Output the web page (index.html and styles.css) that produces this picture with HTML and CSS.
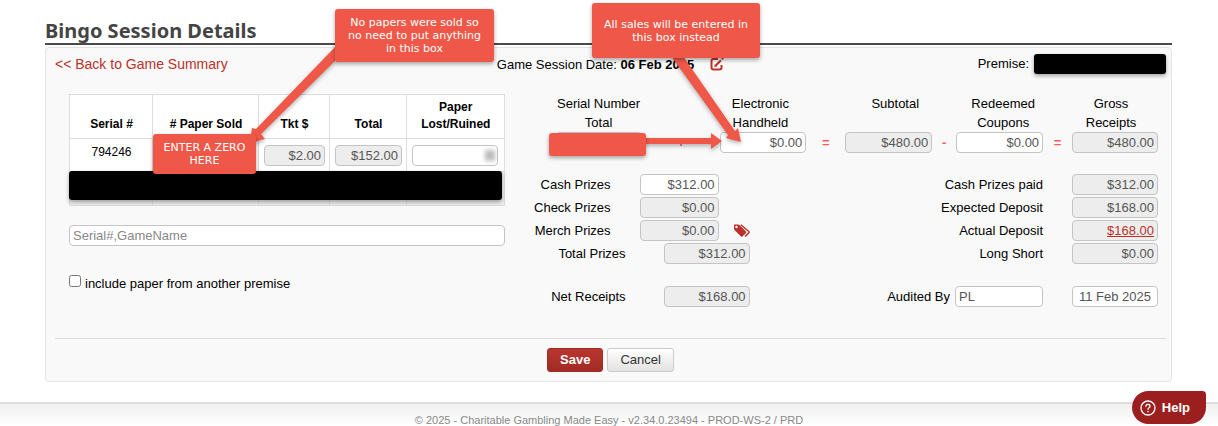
FILE: index.html
```html
<!DOCTYPE html>
<html lang="en">
<head>
    <meta charset="UTF-8">
    <meta name="viewport" content="width=device-width, initial-scale=1.0">
    <title>Bingo Session Details</title>
    <link rel="stylesheet" href="styles.css">
</head>
<body>

    <main class="page">
        <h1>Bingo Session Details</h1>

        <form class="panel">
            <div class="top-bar">
                <a href="#" class="back">&lt;&lt; Back to Game Summary</a>
                <div class="session-date">
                    <span>Game Session Date: <b>06 Feb 2025</b></span>
                    <a href="#" class="edit" aria-label="Edit date">
                        <svg width="14" height="14" viewBox="0 0 14 14" fill="none" stroke="#c0332b" stroke-width="2">
                            <path d="M8 2H3.500Q1.500 2 1.500 4V10.500Q1.500 12.500 3.500 12.500H9.500Q11.500 12.500 11.500 10.500V8"/>
                            <path d="M5.500 8.700L11 3.200" stroke-width="2.200"/>
                            <path d="M11.900 2.300L13.200 1" stroke-width="2.200"/>
                            <path d="M4.200 10L4.800 7.300L6.900 9.400Z" fill="#c0332b" stroke="none"/>
                        </svg>
                    </a>
                </div>
                <div class="premise">Premise: <span class="redacted"></span></div>
            </div>

            <div class="content">
                <!-- Paper list -->
                <section class="paper">
                    <div class="paper-list">
                        <table>
                            <colgroup>
                                <col class="col-serial"><col class="col-sold"><col class="col-tkt"><col class="col-total"><col class="col-lost">
                            </colgroup>
                            <thead>
                                <tr>
                                    <th>Serial #</th>
                                    <th># Paper Sold</th>
                                    <th>Tkt $</th>
                                    <th>Total</th>
                                    <th>Paper Lost/Ruined</th>
                                </tr>
                            </thead>
                            <tbody>
                                <tr>
                                    <td class="serial">794246</td>
                                    <td></td>
                                    <td><input type="text" value="$2.00" aria-label="Tkt $" readonly></td>
                                    <td><input type="text" value="$152.00" aria-label="Total" readonly></td>
                                    <td class="lost"><input type="text" aria-label="Paper Lost/Ruined"><span class="smudge"></span></td>
                                </tr>
                                <tr class="last"><td></td><td></td><td></td><td></td><td></td></tr>
                            </tbody>
                        </table>
                        <div class="redacted-row"></div>
                    </div>
                    <input type="text" class="search" placeholder="Serial#,GameName" aria-label="Serial#,GameName">
                    <div class="other-premise">
                        <input type="checkbox" id="otherPremise">
                        <label for="otherPremise">include paper from another premise</label>
                    </div>
                </section>

                <!-- Receipts and prizes -->
                <section class="totals">
                    <div class="equation-labels">
                        <label for="serialTotal">Serial Number Total</label>
                        <span></span>
                        <label for="handheld">Electronic Handheld</label>
                        <span></span>
                        <label for="subtotal">Subtotal</label>
                        <span></span>
                        <label for="coupons">Redeemed Coupons</label>
                        <span></span>
                        <label for="gross">Gross Receipts</label>
                    </div>
                    <div class="equation">
                        <input type="text" id="serialTotal" readonly>
                        <span class="op">+</span>
                        <input type="text" id="handheld" value="$0.00">
                        <span class="op">=</span>
                        <input type="text" id="subtotal" value="$480.00" readonly>
                        <span class="op">-</span>
                        <input type="text" id="coupons" value="$0.00">
                        <span class="op">=</span>
                        <input type="text" id="gross" value="$480.00" readonly>
                    </div>

                    <div class="summary">
                        <div class="prizes">
                            <div class="prize-row">
                                <label for="cash">Cash Prizes</label>
                                <input type="text" id="cash" value="$312.00">
                            </div>
                            <div class="prize-row">
                                <label for="check">Check Prizes</label>
                                <input type="text" id="check" value="$0.00" readonly>
                            </div>
                            <div class="prize-row">
                                <label for="merch">Merch Prizes</label>
                                <input type="text" id="merch" value="$0.00" readonly>
                                <a href="#" class="tags" aria-label="Merch prizes">
                                    <svg width="18" height="15" viewBox="0 0 18 15">
                                        <path fill="#b9322b" fill-rule="evenodd" d="M1 1.500L1 5.800Q1 6.500 1.500 7L8 13.500Q8.700 14.100 9.400 13.500L13 9.900Q13.600 9.200 13 8.500L6.500 2Q6 1.500 5.300 1.500ZM3.500 2.800A1.200 1.200 0 1 1 3.500 5.200A1.200 1.200 0 1 1 3.500 2.800Z"/>
                                        <path fill="none" stroke="#b9322b" stroke-width="1.500" d="M7.800 1.800L15.800 8.500Q16.500 9.200 15.800 9.900L12 13.500"/>
                                    </svg>
                                </a>
                            </div>
                            <div class="prize-row total">
                                <label for="totalPrizes">Total Prizes</label>
                                <input type="text" id="totalPrizes" value="$312.00" readonly>
                            </div>
                            <div class="prize-row total net">
                                <label for="net">Net Receipts</label>
                                <input type="text" id="net" value="$168.00" readonly>
                            </div>
                        </div>

                        <div class="deposits">
                            <div class="deposit-row">
                                <label for="cashPaid">Cash Prizes paid</label>
                                <input type="text" id="cashPaid" value="$312.00" readonly>
                            </div>
                            <div class="deposit-row">
                                <label for="expected">Expected Deposit</label>
                                <input type="text" id="expected" value="$168.00" readonly>
                            </div>
                            <div class="deposit-row">
                                <span>Actual Deposit</span>
                                <a href="#" class="box">$168.00</a>
                            </div>
                            <div class="deposit-row">
                                <label for="longShort">Long Short</label>
                                <input type="text" id="longShort" value="$0.00" readonly>
                            </div>
                            <div class="deposit-row audit">
                                <div class="audited-by">
                                    <label for="auditor">Audited By</label>
                                    <input type="text" id="auditor" value="PL">
                                </div>
                                <input type="text" class="date" value="11 Feb 2025" aria-label="Audit date">
                            </div>
                        </div>
                    </div>
                </section>
            </div>

            <div class="actions">
                <button type="button" class="save">Save</button>
                <button type="button" class="cancel">Cancel</button>
            </div>
        </form>
    </main>

    <footer>© 2025 - Charitable Gambling Made Easy - v2.34.0.23494 - PROD-WS-2 / PRD</footer>

    <!-- Notes on top of the form -->
    <div class="notes">
        <svg class="arrows" width="800" height="200" viewBox="0 0 800 200" fill="#ef5848">
            <path d="M337 45L256 129L252 128L250 143L265 139L261 134L342 54Z"/>
            <path d="M671 56L728 135L726 138L741 142L738 128L735 131L683 56Z"/>
            <path d="M644 138H711V133L722 141L711 149V144H644Z"/>
        </svg>
        <div class="note note-papers">No papers were sold so<br>no need to put anything<br>in this box</div>
        <div class="note note-sales">All sales will be entered in<br>this box instead</div>
        <div class="note note-zero">ENTER A ZERO<br>HERE</div>
        <div class="note note-blank"></div>
    </div>

    <button type="button" class="help">
        <svg width="16" height="16" viewBox="0 0 16 16" fill="none" stroke="#fff" stroke-width="1.300" stroke-linecap="round">
            <circle cx="8" cy="8" r="7"/>
            <path d="M6 6.300Q6 4.400 8 4.400T10 6.200Q10 7.200 9 7.800T8 9.300"/>
            <path d="M8 11.500V11.600" stroke-width="1.600"/>
        </svg>
        Help
    </button>

</body>
</html>
```

FILE: styles.css
```css
* {
    box-sizing: border-box;
}
body {
    margin: 0;
    background-color: #fff;
    font-family: "Liberation Sans", Arial, sans-serif;
    font-size: 13px;
    line-height: 19px;
    color: #000;
}
a {
    color: #b9322b;
}
.page {
    padding: 18px 46px 20px 45px;
}
h1 {
    margin: 0 0 2px;
    border-bottom: 2px solid #4a4a4a;
    font-family: "Noto Sans", Tahoma, sans-serif;
    font-size: 20px;
    line-height: 25px;
    color: #444;
}
.panel {
    background-color: #f9f9f9;
    border: 1px solid #e3e3e3;
    border-radius: 4px;
    padding: 6px 5px 9px 9px;
}

/* Top bar */
.top-bar {
    display: grid;
    grid-template-columns: 1fr auto 1fr;
    align-items: center;
    height: 20px;
}
.back {
    text-decoration: none;
    font-size: 14px;
}
.session-date {
    display: flex;
    gap: 16px;
}
.edit svg {
    display: block;
    margin-top: 2px;
}
.premise {
    display: flex;
    justify-content: flex-end;
    gap: 5px;
}
.redacted {
    width: 132px;
    height: 20px;
    background-color: #000;
    border-radius: 3px;
    box-shadow: 0 2px 4px rgba(0, 0, 0, 0.35);
}

.content {
    display: grid;
    grid-template-columns: 40% 1fr;
    margin: 20px 0 31px;
    padding: 0 8px 0 14px;
}

/* Inputs */
input[type="text"], .box {
    display: block;
    width: 100%;
    min-width: 0;
    height: 21px;
    border: 1px solid #c4c4c4;
    border-radius: 4px;
    background-color: #fff;
    padding: 0 3px;
    font-family: inherit;
    font-size: 13px;
    line-height: 19px;
    text-align: right;
    color: #555;
}
input[readonly], .box {
    background-color: #ededed;
}
input::placeholder {
    color: #888;
}
.box {
    color: #b9322b;
}

/* Paper table */
.paper-list {
    position: relative;
}
table {
    width: 100%;
    border-collapse: collapse;
    table-layout: fixed;
    background-color: #fff;
    font-size: 12px;
}
.col-serial { width: 83px; }
.col-sold { width: 106px; }
.col-tkt { width: 71px; }
.col-total { width: 77px; }
th, td {
    border: 1px solid #ddd;
    padding: 0 4px 0 5px;
}
th {
    height: 44px;
    line-height: 17px;
    vertical-align: bottom;
    padding-bottom: 5px;
}
td {
    height: 33px;
}
.serial {
    text-align: center;
    vertical-align: top;
    padding-top: 4px;
}
.last td {
    height: 34px;
    background-color: #eee;
}
.lost {
    position: relative;
    padding-right: 6px;
}
.smudge {
    position: absolute;
    right: 9px;
    top: 11px;
    width: 10px;
    height: 11px;
    background-color: #bbb;
    filter: blur(2px);
}
.redacted-row {
    position: absolute;
    left: 0;
    right: 3px;
    bottom: 6px;
    height: 29px;
    background-color: #000;
    border-radius: 3px;
    box-shadow: 0 2px 4px rgba(0, 0, 0, 0.35);
}
input.search {
    margin-top: 19px;
    text-align: left;
}
.other-premise {
    display: flex;
    gap: 4px;
    margin-top: 28px;
}
.other-premise input {
    width: 12px;
    height: 12px;
    margin: 1px 0 0;
}

/* Receipts equation */
.equation-labels, .equation {
    display: grid;
    padding-left: 51px;
    text-align: center;
}
.equation-labels {
    grid-template-columns: 86fr 76fr 86fr 49fr 86fr 22fr 86fr 22fr 86fr 4fr;
}
.equation {
    grid-template-columns: 86fr 79fr 86fr 39fr 87fr 24fr 87fr 29fr 86fr;
}
.op {
    color: #ff5a5a;
    font-weight: bold;
    line-height: 21px;
}

/* Prizes and deposits */
.summary {
    display: flex;
    justify-content: space-between;
    margin-top: 21px;
}
.prizes, .deposits {
    display: grid;
    gap: 2px;
}
.prize-row, .deposit-row {
    display: grid;
    align-items: center;
    height: 21px;
    text-align: right;
}
.prize-row {
    grid-template-columns: 106px 79px 18px;
    column-gap: 29px;
}
.prize-row.total {
    grid-template-columns: 121px 86px;
    column-gap: 38px;
}
.tags {
    margin-left: -15px;
}
.tags svg {
    display: block;
}
.deposit-row {
    grid-template-columns: 1fr 86px;
    column-gap: 29px;
}
.net, .audit {
    margin-top: 20px;
}
.audited-by {
    display: grid;
    grid-template-columns: 1fr 88px;
    column-gap: 5px;
    align-items: center;
}
.audited-by input {
    text-align: left;
}
input.date {
    text-align: center;
}

/* Buttons */
.actions {
    display: flex;
    justify-content: center;
    gap: 4px;
    border-top: 1px solid #ddd;
    padding-top: 9px;
}
.actions button {
    height: 24px;
    border: 1px solid #ccc;
    border-radius: 3px;
    padding: 0 12px;
    font-family: inherit;
    font-size: 13px;
    line-height: 20px;
}
.actions .save {
    background-image: linear-gradient(#b9362e, #a02c25);
    border-color: #a02c25;
    color: #fff;
    font-weight: bold;
}
.actions .cancel {
    background-image: linear-gradient(#fff, #e2e2e2);
    color: #333;
}

footer {
    height: 24px;
    border-top: 2px solid #ddd;
    background-image: linear-gradient(#f0f0f0, #fff);
    padding-top: 9px;
    font-size: 11px;
    line-height: 15px;
    text-align: center;
    color: #888;
    overflow: hidden;
}

/* Notes */
.notes {
    position: absolute;
    left: 0;
    top: 0;
}
.arrows {
    display: block;
    filter: drop-shadow(0 2px 2px rgba(0, 0, 0, 0.3));
}
.note {
    position: absolute;
    display: flex;
    align-items: center;
    justify-content: center;
    background-color: #ef5848;
    border-radius: 3px;
    box-shadow: 0 2px 4px rgba(0, 0, 0, 0.35);
    color: #fff;
    font-family: "DejaVu Sans", Verdana, sans-serif;
    font-size: 11px;
    line-height: 13px;
    text-align: center;
    white-space: nowrap;
}
.note-papers { left: 335px; top: 9px; width: 159px; height: 53px; }
.note-sales { left: 592px; top: 3px; width: 168px; height: 55px; }
.note-zero { left: 153px; top: 134px; width: 103px; height: 40px; }
.note-blank { left: 549px; top: 133px; width: 97px; height: 23px; }

.help {
    position: fixed;
    right: 12px;
    bottom: 2px;
    display: flex;
    align-items: center;
    gap: 6px;
    height: 33px;
    border: none;
    border-radius: 18px 4px 18px 18px;
    background-color: #9b1f1f;
    padding: 0 16px 0 8px;
    font-family: inherit;
    font-size: 13px;
    font-weight: bold;
    color: #fff;
}
```
